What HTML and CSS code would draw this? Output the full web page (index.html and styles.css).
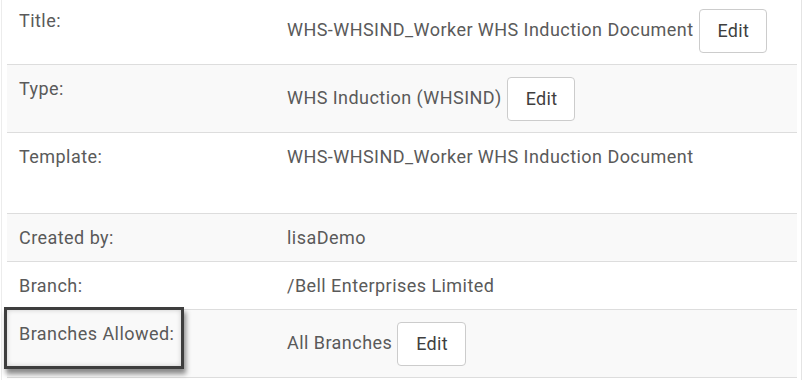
FILE: index.html
```html
<!DOCTYPE html>
<html lang="en">
<head>
<meta charset="utf-8">
<title>Document details</title>
<link rel="stylesheet" href="styles.css">
</head>
<body>
<div class="panel">
  <table class="details">
    <tbody>
      <tr>
        <td class="label">Title:</td>
        <td class="value">WHS-WHSIND_Worker WHS Induction Document <button class="btn">Edit</button></td>
      </tr>
      <tr class="alt">
        <td class="label">Type:</td>
        <td class="value">WHS Induction (WHSIND) <button class="btn">Edit</button></td>
      </tr>
      <tr>
        <td class="label">Template:</td>
        <td class="value top">WHS-WHSIND_Worker WHS Induction Document<div class="spacer"></div></td>
      </tr>
      <tr class="alt">
        <td class="label">Created by:</td>
        <td class="value">lisaDemo</td>
      </tr>
      <tr>
        <td class="label">Branch:</td>
        <td class="value">/Bell Enterprises Limited</td>
      </tr>
      <tr class="alt last">
        <td class="label highlighted">Branches Allowed:<span class="callout"></span></td>
        <td class="value">All Branches <button class="btn">Edit</button></td>
      </tr>
    </tbody>
  </table>
</div>
</body>
</html>
```

FILE: styles.css
```css
html, body {
  margin: 0;
  padding: 0;
  background: #ffffff;
}

body {
  font-family: Roboto, "Liberation Sans", Arial, sans-serif;
  font-size: 18px;
  letter-spacing: 0.45px;
  color: #5a5a5a;
  overflow: hidden;
}

.panel {
  margin: -4px 0 0 1px;
  padding: 0 4px 0 5px;
  border-left: 1px solid #ececec;
  border-right: 1px solid #e4e4e4;
  box-sizing: content-box;
  width: 790px;
  height: 400px;
}

.details {
  width: 790px;
  border-collapse: collapse;
  border-spacing: 0;
}

.details td {
  border-top: 1px solid #dddddd;
  padding: 12px 12px 11px 12px;
  line-height: 24px;
  vertical-align: top;
}

.details tr.last td {
  border-bottom: 1px solid #dddddd;
}

.details tr.alt td {
  background: #f9f9f9;
}

.label {
  width: 244px;
}

.value {
  white-space: nowrap;
}

.spacer {
  height: 33px;
}

.btn {
  display: inline-block;
  vertical-align: middle;
  box-sizing: border-box;
  height: 44px;
  padding: 9px 17px 9px 18px;
  margin: 0;
  font-family: inherit;
  font-size: 18px;
  letter-spacing: 0.3px;
  line-height: 24px;
  color: #3f3f3f;
  background: #ffffff;
  border: 1px solid #cccccc;
  border-radius: 4px;
}

.highlighted {
  position: relative;
}

.callout {
  position: absolute;
  left: -3px;
  top: -3px;
  width: 174px;
  height: 56px;
  border: 3px solid #3e3e3e;
  box-shadow: 2px 5px 5px rgba(0, 0, 0, 0.45), inset 0 0 5px rgba(0, 0, 0, 0.18);
}
```
